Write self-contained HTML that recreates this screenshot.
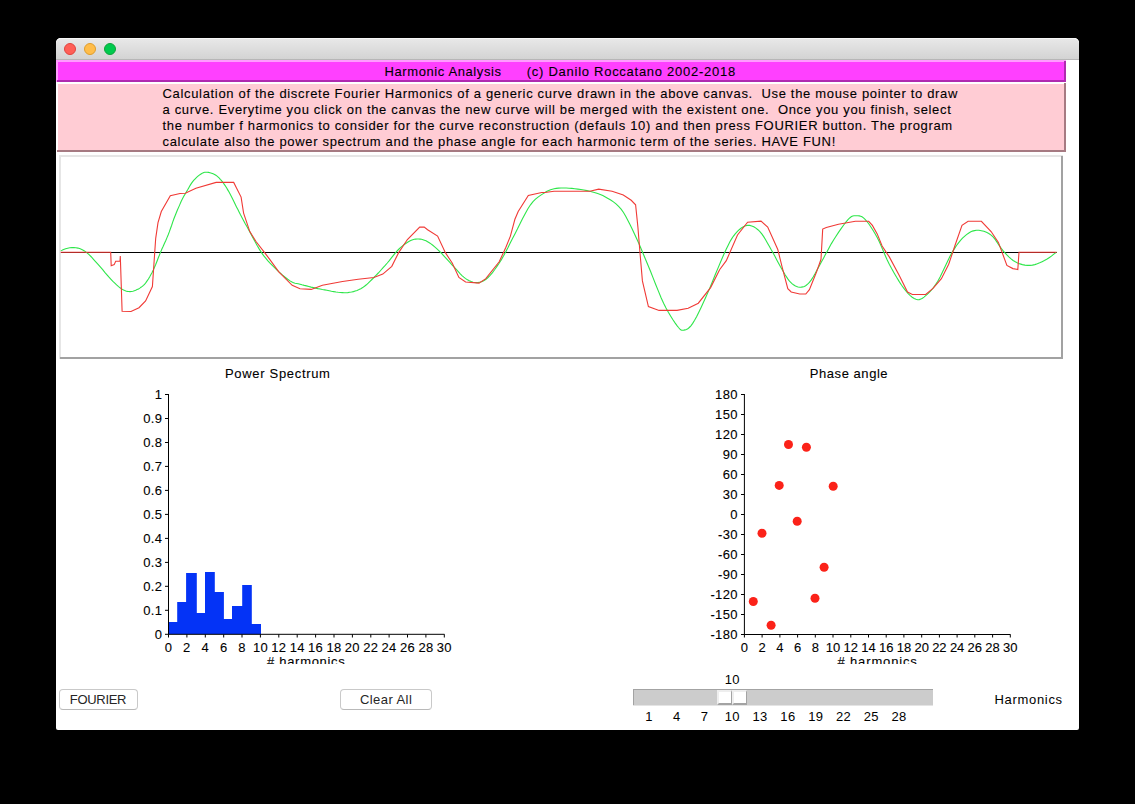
<!DOCTYPE html>
<html><head><meta charset="utf-8"><style>
html,body{margin:0;padding:0;background:#000;width:1135px;height:804px;overflow:hidden;}
.t{position:absolute;white-space:pre;line-height:16px;font-family:"Liberation Sans", sans-serif;-webkit-text-stroke:0.1px currentColor;}
.a{position:absolute;}
</style></head><body>

<div class="a" style="left:56px;top:38px;width:1023px;height:692px;background:#fff;border-radius:5px 5px 2px 2px;overflow:hidden;"></div>
<div class="a" style="left:56px;top:38px;width:1023px;height:21px;background:linear-gradient(#e9e9e9,#d3d3d3);border-radius:5px 5px 0 0;box-shadow:inset 0 1px 0 #f6f6f6;"></div>
<div class="a" style="left:56px;top:59px;width:1023px;height:1px;background:#b6b6b6;"></div>
<div class="a" style="left:64.20px;top:43.2px;width:10.2px;height:10.2px;border-radius:50%;background:#ff5f57;border:0.6px solid #e0443e;"></div>
<div class="a" style="left:84.20px;top:43.2px;width:10.2px;height:10.2px;border-radius:50%;background:#ffbd4a;border:0.6px solid #df9d2c;"></div>
<div class="a" style="left:104.20px;top:43.2px;width:10.2px;height:10.2px;border-radius:50%;background:#00ca4e;border:0.6px solid #0ea33a;"></div>
<div class="a" style="left:56px;top:60px;width:1010px;height:22px;background:#ff40ff;"></div>
<div class="a" style="left:56px;top:60px;width:1010px;height:2px;background:#ff9cff;"></div>
<div class="a" style="left:56px;top:60px;width:2px;height:22px;background:#ff9cff;"></div>
<div class="a" style="left:57px;top:80px;width:1009px;height:2px;background:#b02ab0;"></div>
<div class="a" style="left:1064px;top:61px;width:2px;height:21px;background:#b02ab0;"></div>
<div class="a" style="left:56px;top:82px;width:1010px;height:70px;background:#ffccd4;"></div>
<div class="a" style="left:56px;top:82px;width:1010px;height:2px;background:#fff;"></div>
<div class="a" style="left:56px;top:82px;width:2px;height:70px;background:#fff;"></div>
<div class="a" style="left:57px;top:150px;width:1009px;height:2px;background:#a67a82;"></div>
<div class="a" style="left:1064px;top:83px;width:2px;height:69px;background:#a67a82;"></div>
<div class="a" style="left:59px;top:155px;width:1004px;height:204px;background:#fff;"></div>
<div class="a" style="left:59px;top:155px;width:1004px;height:2px;background:#e6e6e6;"></div>
<div class="a" style="left:59px;top:155px;width:2px;height:204px;background:#e6e6e6;"></div>
<div class="a" style="left:60px;top:357px;width:1003px;height:2px;background:#a2a2a2;"></div>
<div class="a" style="left:1061px;top:156px;width:2px;height:203px;background:#a2a2a2;"></div>
<svg class="a" style="left:0;top:0" width="1135" height="804" viewBox="0 0 1135 804">
<line x1="61" y1="252.5" x2="1057" y2="252.5" stroke="#000" stroke-width="1.2"/>
<polyline fill="none" stroke="#2ee64a" stroke-width="1.1" points="60.8,250.6 62.0,250.2 63.6,249.6 65.6,248.8 67.7,248.2 69.8,247.7 71.9,247.5 73.9,247.6 75.9,247.8 78.0,248.1 80.2,248.8 82.3,249.7 84.5,250.9 86.7,252.6 89.1,254.7 91.4,257.0 93.7,259.6 96.0,262.1 98.3,264.6 100.5,267.1 102.7,269.6 104.8,272.3 107.0,274.8 109.0,277.2 111.0,279.4 112.9,281.4 114.8,283.2 116.6,284.9 118.3,286.4 120.0,287.8 121.6,288.9 123.1,289.8 124.6,290.5 125.9,291.0 127.3,291.4 128.6,291.5 130.0,291.6 131.4,291.5 132.9,291.2 134.3,290.8 135.7,290.3 137.1,289.6 138.5,288.9 139.8,288.1 141.0,287.3 142.3,286.4 143.5,285.3 144.7,284.1 145.9,282.6 147.1,280.9 148.4,279.0 149.6,277.0 150.8,274.8 152.1,272.4 153.3,269.9 154.5,267.2 155.8,264.3 157.0,261.2 158.2,258.0 159.5,254.9 160.7,251.9 161.9,249.0 163.2,246.3 164.4,243.5 165.7,240.7 166.9,237.9 168.1,235.0 169.3,231.9 170.4,228.7 171.6,225.5 172.7,222.2 173.8,219.0 175.0,216.0 176.2,213.0 177.4,210.0 178.7,207.1 179.9,204.4 181.0,201.8 182.1,199.6 183.0,197.7 183.8,196.2 184.6,194.9 185.3,193.7 186.1,192.5 186.9,191.1 187.8,189.6 188.7,187.9 189.6,186.3 190.6,184.6 191.6,183.1 192.7,181.6 193.9,180.2 195.2,178.8 196.6,177.4 198.0,176.2 199.3,175.1 200.6,174.2 201.8,173.5 202.8,172.9 203.8,172.5 204.9,172.3 206.0,172.2 207.2,172.2 208.6,172.4 210.0,172.7 211.6,173.2 213.1,173.8 214.6,174.5 215.9,175.3 217.1,176.1 218.2,177.1 219.3,178.1 220.3,179.3 221.3,180.4 222.3,181.6 223.2,182.8 224.1,184.1 225.0,185.4 225.9,186.7 226.7,188.1 227.6,189.6 228.5,191.1 229.3,192.6 230.1,194.1 231.0,195.8 231.9,197.6 232.9,199.6 234.0,201.8 235.2,204.3 236.5,206.9 237.9,209.6 239.2,212.2 240.5,214.8 241.8,217.2 243.0,219.4 244.2,221.7 245.4,224.0 246.9,226.6 248.5,229.5 250.4,233.0 252.5,236.9 254.7,241.0 257.0,245.2 259.3,249.1 261.5,252.6 263.6,255.6 265.7,258.2 267.7,260.6 269.8,262.9 272.0,265.1 274.3,267.4 276.8,269.8 279.5,272.4 282.3,274.9 285.1,277.2 287.7,279.3 290.0,280.9 292.0,282.0 293.6,282.8 295.1,283.2 296.6,283.5 298.2,283.8 300.0,284.2 302.0,284.8 304.2,285.4 306.5,285.9 308.8,286.5 311.1,287.1 313.4,287.6 315.6,288.1 317.9,288.6 320.1,289.0 322.4,289.5 324.7,289.9 326.9,290.3 329.2,290.7 331.5,291.2 333.7,291.6 336.0,292.0 338.2,292.3 340.3,292.5 342.3,292.6 344.2,292.7 346.0,292.7 347.8,292.6 349.7,292.3 351.5,292.0 353.4,291.6 355.2,291.0 357.1,290.4 359.0,289.6 360.8,288.7 362.7,287.6 364.5,286.3 366.4,284.8 368.2,283.2 370.0,281.4 371.9,279.5 373.9,277.5 376.0,275.3 378.3,273.0 380.6,270.5 382.9,267.9 385.2,265.4 387.3,263.0 389.3,260.6 391.2,258.2 393.0,255.9 394.8,253.6 396.7,251.4 398.5,249.5 400.4,247.7 402.3,246.1 404.2,244.5 406.1,243.2 408.0,242.0 409.7,241.0 411.3,240.2 412.8,239.7 414.3,239.3 415.7,239.1 417.1,239.0 418.6,239.0 420.1,239.1 421.5,239.3 423.0,239.7 424.4,240.2 426.0,240.8 427.6,241.7 429.3,242.7 431.0,243.9 432.8,245.3 434.7,246.8 436.7,248.6 438.8,250.6 441.2,253.0 443.8,255.8 446.6,258.9 449.4,261.9 452.0,264.8 454.4,267.4 456.5,269.7 458.5,271.8 460.3,273.8 462.0,275.6 463.8,277.2 465.6,278.6 467.5,279.8 469.3,280.8 471.2,281.6 473.1,282.2 474.9,282.5 476.8,282.6 478.6,282.4 480.5,282.0 482.3,281.4 484.1,280.5 486.0,279.2 488.0,277.5 490.1,275.3 492.3,272.8 494.6,269.8 496.8,266.6 499.1,263.2 501.4,259.6 503.6,255.8 505.8,251.7 508.0,247.5 510.2,243.0 512.5,238.5 514.9,233.9 517.4,229.1 520.0,223.8 522.6,218.5 525.3,213.4 527.9,208.7 530.5,204.8 533.0,201.7 535.5,199.2 538.0,197.1 540.5,195.4 542.8,193.9 545.0,192.5 547.0,191.3 548.8,190.4 550.5,189.7 552.3,189.2 554.1,188.8 556.2,188.4 558.5,188.1 561.0,188.0 563.6,188.0 566.3,188.0 569.1,188.2 571.9,188.4 574.8,188.7 577.8,189.1 580.9,189.5 583.9,190.0 586.9,190.6 589.8,191.3 592.5,192.0 595.2,192.7 597.7,193.5 600.3,194.4 602.8,195.5 605.4,196.9 608.0,198.4 610.7,200.0 613.4,201.9 616.0,203.9 618.6,206.4 621.1,209.2 623.5,212.5 625.7,216.3 627.9,220.4 630.1,224.7 632.3,229.3 634.5,233.9 636.7,238.7 638.9,243.6 641.1,248.7 643.3,254.0 645.6,259.5 648.0,265.2 650.5,271.3 653.1,277.9 655.8,284.8 658.5,291.4 661.1,297.7 663.6,303.2 666.0,308.0 668.5,312.5 670.9,316.5 673.1,320.0 675.2,323.1 677.0,325.6 678.5,327.5 679.7,328.8 680.7,329.7 681.6,330.1 682.6,330.2 683.8,330.1 685.1,329.9 686.4,329.4 687.8,328.7 689.3,327.5 690.9,325.8 692.7,323.4 694.6,320.3 696.7,316.5 698.8,312.2 701.1,307.4 703.6,302.1 706.1,296.5 708.9,290.1 712.0,282.7 715.2,274.8 718.4,267.1 721.4,260.0 724.0,254.0 726.2,249.2 728.2,245.2 729.9,241.8 731.6,238.9 733.3,236.3 735.2,233.9 737.2,231.6 739.2,229.7 741.3,228.0 743.4,226.7 745.5,225.8 747.6,225.4 749.7,225.4 751.7,225.9 753.8,226.8 755.9,228.1 757.9,229.7 759.9,231.6 761.8,233.9 763.7,236.6 765.6,239.7 767.4,242.9 769.3,246.2 771.1,249.5 773.0,252.8 774.9,256.3 776.8,259.9 778.7,263.5 780.5,266.8 782.2,269.7 783.7,272.3 785.1,274.7 786.5,276.9 787.8,278.9 789.1,280.6 790.5,282.2 792.0,283.6 793.5,284.8 795.0,285.8 796.6,286.5 798.1,287.0 799.7,287.2 801.3,287.1 802.8,286.9 804.4,286.4 806.0,285.5 807.6,284.2 809.4,282.4 811.3,279.9 813.3,276.7 815.3,273.2 817.4,269.3 819.5,265.5 821.5,261.8 823.5,258.2 825.4,254.6 827.4,250.9 829.4,247.2 831.4,243.6 833.6,240.0 836.0,236.3 838.5,232.4 841.1,228.6 843.7,225.0 846.1,221.8 848.2,219.4 850.0,217.7 851.5,216.6 852.8,216.0 854.0,215.8 855.3,215.7 856.6,215.7 858.0,215.7 859.3,215.9 860.6,216.2 862.0,216.8 863.5,217.9 865.1,219.4 866.9,221.5 868.9,224.0 870.9,227.0 873.0,230.3 875.1,233.8 877.2,237.5 879.2,241.5 881.1,245.9 883.1,250.5 885.1,255.2 887.1,259.8 889.3,264.2 891.6,268.5 894.1,272.9 896.6,277.3 899.1,281.4 901.6,285.2 903.9,288.4 906.1,291.2 908.2,293.6 910.3,295.6 912.2,297.2 914.2,298.5 916.0,299.3 917.7,299.7 919.3,299.6 920.9,299.1 922.4,298.2 924.0,297.1 925.7,295.7 927.5,294.1 929.5,292.2 931.5,290.0 933.5,287.5 935.6,284.6 937.8,281.2 940.1,277.0 942.5,272.1 945.0,266.7 947.5,261.4 950.0,256.3 952.3,252.1 954.5,248.6 956.5,245.5 958.5,242.8 960.5,240.3 962.5,238.2 964.5,236.3 966.5,234.6 968.5,233.2 970.4,232.0 972.4,231.1 974.4,230.6 976.6,230.3 978.9,230.3 981.3,230.7 983.9,231.3 986.4,232.3 988.8,233.5 991.1,235.1 993.3,237.2 995.3,239.7 997.3,242.6 999.3,245.6 1001.2,248.4 1003.2,250.9 1005.2,253.1 1007.1,255.2 1009.1,257.1 1011.1,258.9 1013.1,260.5 1015.3,261.8 1017.6,262.9 1020.0,263.9 1022.4,264.6 1024.9,265.1 1027.4,265.4 1029.9,265.4 1032.4,265.1 1034.8,264.6 1037.3,263.8 1039.7,262.8 1042.1,261.7 1044.4,260.6 1046.7,259.3 1049.1,257.7 1051.4,256.1 1053.5,254.4 1055.2,253.1 1056.5,252.1"/>
<polyline fill="none" stroke="#f03a36" stroke-width="1.1" points="60.6,252.2 110.7,252.2 111.2,265.7 114.2,264.6 115.7,261.2 120.0,261.2 120.3,256.1 122.1,311.3 131.0,311.5 139.0,307.7 145.6,301.0 152.4,286.5 154.0,263.0 155.7,238.3 158.0,222.7 161.3,211.5 170.3,195.8 180.0,193.5 185.3,193.3 195.9,188.2 216.1,182.4 233.7,182.4 236.5,188.0 241.1,197.1 243.6,213.1 249.8,231.6 256.0,241.5 264.6,252.6 269.9,259.6 278.8,271.9 292.2,285.3 300.0,288.7 311.2,289.4 322.4,285.3 342.5,281.5 358.2,279.3 373.9,277.5 382.8,274.1 391.8,266.3 398.5,252.9 407.4,239.5 419.7,227.1 424.2,227.1 427.6,229.8 437.6,236.1 445.5,252.9 452.2,263.0 458.9,277.5 465.6,282.0 479.0,283.1 485.8,278.6 499.2,261.8 505.9,247.3 510.4,236.1 514.9,219.3 518.2,211.5 528.3,195.4 541.7,192.5 545.0,192.5 554.0,191.3 589.8,191.3 598.7,189.1 612.1,191.3 623.3,195.1 631.2,200.3 635.6,204.8 637.9,227.1 640.1,254.0 642.4,280.9 648.4,306.6 659.1,310.4 677.0,310.4 688.2,308.2 698.3,303.2 710.6,287.6 719.6,269.7 726.3,260.7 737.5,235.0 747.6,222.2 761.0,221.1 767.7,227.1 777.8,249.5 782.2,267.4 787.8,288.7 791.2,292.0 799.7,294.0 805.8,294.0 809.4,289.6 816.7,271.5 821.0,259.3 822.7,229.1 826.3,227.4 838.5,224.2 855.4,221.3 868.7,221.3 872.4,225.4 877.2,233.9 882.1,246.0 889.3,256.9 899.0,275.1 907.5,292.1 912.4,294.5 925.7,294.5 933.0,288.4 941.4,278.7 948.7,264.2 954.8,246.0 962.0,225.4 968.1,221.3 981.4,221.3 991.1,231.5 998.4,242.4 1006.9,265.4 1012.9,268.6 1017.8,269.5 1019.0,252.3 1056.5,252.3"/>
<path d="M168.7,634.3 L168.7,622.0 L177.2,622.0 L177.2,602.0 L186.1,602.0 L186.1,573.0 L196.8,573.0 L196.8,613.0 L205.0,613.0 L205.0,572.0 L214.8,572.0 L214.8,591.9 L223.9,591.9 L223.9,619.1 L232.0,619.1 L232.0,606.1 L242.2,606.1 L242.2,585.0 L251.8,585.0 L251.8,623.9 L261.0,623.9 L261.0,634.3 Z" fill="#0433f6"/>
<line x1="168.5" y1="394" x2="168.5" y2="634.8" stroke="#000" stroke-width="1"/>
<line x1="168.5" y1="634.3" x2="444.5" y2="634.3" stroke="#000" stroke-width="1"/>
<line x1="165" y1="634.3" x2="168.5" y2="634.3" stroke="#000" stroke-width="1"/>
<line x1="165" y1="610.3" x2="168.5" y2="610.3" stroke="#000" stroke-width="1"/>
<line x1="165" y1="586.3" x2="168.5" y2="586.3" stroke="#000" stroke-width="1"/>
<line x1="165" y1="562.4" x2="168.5" y2="562.4" stroke="#000" stroke-width="1"/>
<line x1="165" y1="538.4" x2="168.5" y2="538.4" stroke="#000" stroke-width="1"/>
<line x1="165" y1="514.4" x2="168.5" y2="514.4" stroke="#000" stroke-width="1"/>
<line x1="165" y1="490.4" x2="168.5" y2="490.4" stroke="#000" stroke-width="1"/>
<line x1="165" y1="466.4" x2="168.5" y2="466.4" stroke="#000" stroke-width="1"/>
<line x1="165" y1="442.5" x2="168.5" y2="442.5" stroke="#000" stroke-width="1"/>
<line x1="165" y1="418.5" x2="168.5" y2="418.5" stroke="#000" stroke-width="1"/>
<line x1="165" y1="394.5" x2="168.5" y2="394.5" stroke="#000" stroke-width="1"/>
<line x1="168.5" y1="634.3" x2="168.5" y2="637.5" stroke="#000" stroke-width="1"/>
<line x1="186.9" y1="634.3" x2="186.9" y2="637.5" stroke="#000" stroke-width="1"/>
<line x1="205.3" y1="634.3" x2="205.3" y2="637.5" stroke="#000" stroke-width="1"/>
<line x1="223.7" y1="634.3" x2="223.7" y2="637.5" stroke="#000" stroke-width="1"/>
<line x1="242.0" y1="634.3" x2="242.0" y2="637.5" stroke="#000" stroke-width="1"/>
<line x1="260.4" y1="634.3" x2="260.4" y2="637.5" stroke="#000" stroke-width="1"/>
<line x1="278.8" y1="634.3" x2="278.8" y2="637.5" stroke="#000" stroke-width="1"/>
<line x1="297.2" y1="634.3" x2="297.2" y2="637.5" stroke="#000" stroke-width="1"/>
<line x1="315.6" y1="634.3" x2="315.6" y2="637.5" stroke="#000" stroke-width="1"/>
<line x1="334.0" y1="634.3" x2="334.0" y2="637.5" stroke="#000" stroke-width="1"/>
<line x1="352.4" y1="634.3" x2="352.4" y2="637.5" stroke="#000" stroke-width="1"/>
<line x1="370.8" y1="634.3" x2="370.8" y2="637.5" stroke="#000" stroke-width="1"/>
<line x1="389.1" y1="634.3" x2="389.1" y2="637.5" stroke="#000" stroke-width="1"/>
<line x1="407.5" y1="634.3" x2="407.5" y2="637.5" stroke="#000" stroke-width="1"/>
<line x1="425.9" y1="634.3" x2="425.9" y2="637.5" stroke="#000" stroke-width="1"/>
<line x1="444.3" y1="634.3" x2="444.3" y2="637.5" stroke="#000" stroke-width="1"/>
<line x1="744.4" y1="394" x2="744.4" y2="635.0" stroke="#000" stroke-width="1"/>
<line x1="744.4" y1="634.5" x2="1010.5" y2="634.5" stroke="#000" stroke-width="1"/>
<line x1="741" y1="634.5" x2="744.4" y2="634.5" stroke="#000" stroke-width="1"/>
<line x1="741" y1="614.5" x2="744.4" y2="614.5" stroke="#000" stroke-width="1"/>
<line x1="741" y1="594.5" x2="744.4" y2="594.5" stroke="#000" stroke-width="1"/>
<line x1="741" y1="574.5" x2="744.4" y2="574.5" stroke="#000" stroke-width="1"/>
<line x1="741" y1="554.5" x2="744.4" y2="554.5" stroke="#000" stroke-width="1"/>
<line x1="741" y1="534.5" x2="744.4" y2="534.5" stroke="#000" stroke-width="1"/>
<line x1="741" y1="514.5" x2="744.4" y2="514.5" stroke="#000" stroke-width="1"/>
<line x1="741" y1="494.5" x2="744.4" y2="494.5" stroke="#000" stroke-width="1"/>
<line x1="741" y1="474.5" x2="744.4" y2="474.5" stroke="#000" stroke-width="1"/>
<line x1="741" y1="454.5" x2="744.4" y2="454.5" stroke="#000" stroke-width="1"/>
<line x1="741" y1="434.5" x2="744.4" y2="434.5" stroke="#000" stroke-width="1"/>
<line x1="741" y1="414.5" x2="744.4" y2="414.5" stroke="#000" stroke-width="1"/>
<line x1="741" y1="394.5" x2="744.4" y2="394.5" stroke="#000" stroke-width="1"/>
<line x1="744.4" y1="634.5" x2="744.4" y2="637.5" stroke="#000" stroke-width="1"/>
<line x1="762.1" y1="634.5" x2="762.1" y2="637.5" stroke="#000" stroke-width="1"/>
<line x1="779.9" y1="634.5" x2="779.9" y2="637.5" stroke="#000" stroke-width="1"/>
<line x1="797.6" y1="634.5" x2="797.6" y2="637.5" stroke="#000" stroke-width="1"/>
<line x1="815.3" y1="634.5" x2="815.3" y2="637.5" stroke="#000" stroke-width="1"/>
<line x1="833.0" y1="634.5" x2="833.0" y2="637.5" stroke="#000" stroke-width="1"/>
<line x1="850.8" y1="634.5" x2="850.8" y2="637.5" stroke="#000" stroke-width="1"/>
<line x1="868.5" y1="634.5" x2="868.5" y2="637.5" stroke="#000" stroke-width="1"/>
<line x1="886.2" y1="634.5" x2="886.2" y2="637.5" stroke="#000" stroke-width="1"/>
<line x1="903.9" y1="634.5" x2="903.9" y2="637.5" stroke="#000" stroke-width="1"/>
<line x1="921.7" y1="634.5" x2="921.7" y2="637.5" stroke="#000" stroke-width="1"/>
<line x1="939.4" y1="634.5" x2="939.4" y2="637.5" stroke="#000" stroke-width="1"/>
<line x1="957.1" y1="634.5" x2="957.1" y2="637.5" stroke="#000" stroke-width="1"/>
<line x1="974.8" y1="634.5" x2="974.8" y2="637.5" stroke="#000" stroke-width="1"/>
<line x1="992.6" y1="634.5" x2="992.6" y2="637.5" stroke="#000" stroke-width="1"/>
<line x1="1010.3" y1="634.5" x2="1010.3" y2="637.5" stroke="#000" stroke-width="1"/>
<circle cx="753.3" cy="601.5" r="4.5" fill="#fb2219"/>
<circle cx="762" cy="533.2" r="4.5" fill="#fb2219"/>
<circle cx="771.1" cy="625.3" r="4.5" fill="#fb2219"/>
<circle cx="779.2" cy="485.4" r="4.5" fill="#fb2219"/>
<circle cx="788.5" cy="444.5" r="4.5" fill="#fb2219"/>
<circle cx="797.2" cy="521.3" r="4.5" fill="#fb2219"/>
<circle cx="806.4" cy="447.3" r="4.5" fill="#fb2219"/>
<circle cx="815" cy="598.3" r="4.5" fill="#fb2219"/>
<circle cx="824.1" cy="567.3" r="4.5" fill="#fb2219"/>
<circle cx="833.2" cy="486.2" r="4.5" fill="#fb2219"/>
</svg>
<div class="t" style="left:384.50px;top:64.00px;font-size:13px;letter-spacing:0.6px;color:#000;">Harmonic Analysis</div>
<div class="t" style="left:526.80px;top:64.00px;font-size:13px;letter-spacing:0.73px;color:#000;">(c) Danilo Roccatano 2002-2018</div>
<div class="t" style="left:162.50px;top:86.00px;font-size:13px;letter-spacing:0.675px;color:#000;">Calculation of the discrete Fourier Harmonics of a generic curve drawn in the above canvas.  Use the mouse pointer to draw</div>
<div class="t" style="left:162.50px;top:102.00px;font-size:13px;letter-spacing:0.675px;color:#000;">a curve. Everytime you click on the canvas the new curve will be merged with the existent one.  Once you you finish, select</div>
<div class="t" style="left:162.50px;top:118.00px;font-size:13px;letter-spacing:0.675px;color:#000;">the number f harmonics to consider for the curve reconstruction (defauls 10) and then press FOURIER button. The program</div>
<div class="t" style="left:162.50px;top:133.90px;font-size:13px;letter-spacing:0.675px;color:#000;">calculate also the power spectrum and the phase angle for each harmonic term of the series. HAVE FUN!</div>
<div class="t" style="left:225.00px;top:365.80px;font-size:13px;letter-spacing:0.68px;color:#000;">Power Spectrum</div>
<div class="t" style="left:809.80px;top:365.50px;font-size:13px;letter-spacing:0.55px;color:#000;">Phase angle</div>
<div class="t" style="right:972.80px;top:626.90px;font-size:13px;letter-spacing:0.3px;color:#000;text-align:right;">0</div>
<div class="t" style="right:972.80px;top:602.92px;font-size:13px;letter-spacing:0.3px;color:#000;text-align:right;">0.1</div>
<div class="t" style="right:972.80px;top:578.94px;font-size:13px;letter-spacing:0.3px;color:#000;text-align:right;">0.2</div>
<div class="t" style="right:972.80px;top:554.96px;font-size:13px;letter-spacing:0.3px;color:#000;text-align:right;">0.3</div>
<div class="t" style="right:972.80px;top:530.98px;font-size:13px;letter-spacing:0.3px;color:#000;text-align:right;">0.4</div>
<div class="t" style="right:972.80px;top:507.00px;font-size:13px;letter-spacing:0.3px;color:#000;text-align:right;">0.5</div>
<div class="t" style="right:972.80px;top:483.02px;font-size:13px;letter-spacing:0.3px;color:#000;text-align:right;">0.6</div>
<div class="t" style="right:972.80px;top:459.04px;font-size:13px;letter-spacing:0.3px;color:#000;text-align:right;">0.7</div>
<div class="t" style="right:972.80px;top:435.06px;font-size:13px;letter-spacing:0.3px;color:#000;text-align:right;">0.8</div>
<div class="t" style="right:972.80px;top:411.08px;font-size:13px;letter-spacing:0.3px;color:#000;text-align:right;">0.9</div>
<div class="t" style="right:972.80px;top:387.10px;font-size:13px;letter-spacing:0.3px;color:#000;text-align:right;">1</div>
<div class="t" style="left:68.50px;width:200px;top:639.80px;font-size:13px;letter-spacing:0.3px;color:#000;text-align:center;">0</div>
<div class="t" style="left:86.89px;width:200px;top:639.80px;font-size:13px;letter-spacing:0.3px;color:#000;text-align:center;">2</div>
<div class="t" style="left:105.27px;width:200px;top:639.80px;font-size:13px;letter-spacing:0.3px;color:#000;text-align:center;">4</div>
<div class="t" style="left:123.66px;width:200px;top:639.80px;font-size:13px;letter-spacing:0.3px;color:#000;text-align:center;">6</div>
<div class="t" style="left:142.05px;width:200px;top:639.80px;font-size:13px;letter-spacing:0.3px;color:#000;text-align:center;">8</div>
<div class="t" style="left:160.43px;width:200px;top:639.80px;font-size:13px;letter-spacing:0.3px;color:#000;text-align:center;">10</div>
<div class="t" style="left:178.82px;width:200px;top:639.80px;font-size:13px;letter-spacing:0.3px;color:#000;text-align:center;">12</div>
<div class="t" style="left:197.21px;width:200px;top:639.80px;font-size:13px;letter-spacing:0.3px;color:#000;text-align:center;">14</div>
<div class="t" style="left:215.59px;width:200px;top:639.80px;font-size:13px;letter-spacing:0.3px;color:#000;text-align:center;">16</div>
<div class="t" style="left:233.98px;width:200px;top:639.80px;font-size:13px;letter-spacing:0.3px;color:#000;text-align:center;">18</div>
<div class="t" style="left:252.37px;width:200px;top:639.80px;font-size:13px;letter-spacing:0.3px;color:#000;text-align:center;">20</div>
<div class="t" style="left:270.75px;width:200px;top:639.80px;font-size:13px;letter-spacing:0.3px;color:#000;text-align:center;">22</div>
<div class="t" style="left:289.14px;width:200px;top:639.80px;font-size:13px;letter-spacing:0.3px;color:#000;text-align:center;">24</div>
<div class="t" style="left:307.53px;width:200px;top:639.80px;font-size:13px;letter-spacing:0.3px;color:#000;text-align:center;">26</div>
<div class="t" style="left:325.91px;width:200px;top:639.80px;font-size:13px;letter-spacing:0.3px;color:#000;text-align:center;">28</div>
<div class="t" style="left:344.30px;width:200px;top:639.80px;font-size:13px;letter-spacing:0.3px;color:#000;text-align:center;">30</div>
<div class="t" style="right:397.30px;top:627.10px;font-size:13px;letter-spacing:0.3px;color:#000;text-align:right;">-180</div>
<div class="t" style="right:397.30px;top:607.10px;font-size:13px;letter-spacing:0.3px;color:#000;text-align:right;">-150</div>
<div class="t" style="right:397.30px;top:587.10px;font-size:13px;letter-spacing:0.3px;color:#000;text-align:right;">-120</div>
<div class="t" style="right:397.30px;top:567.10px;font-size:13px;letter-spacing:0.3px;color:#000;text-align:right;">-90</div>
<div class="t" style="right:397.30px;top:547.10px;font-size:13px;letter-spacing:0.3px;color:#000;text-align:right;">-60</div>
<div class="t" style="right:397.30px;top:527.10px;font-size:13px;letter-spacing:0.3px;color:#000;text-align:right;">-30</div>
<div class="t" style="right:397.30px;top:507.10px;font-size:13px;letter-spacing:0.3px;color:#000;text-align:right;">0</div>
<div class="t" style="right:397.30px;top:487.10px;font-size:13px;letter-spacing:0.3px;color:#000;text-align:right;">30</div>
<div class="t" style="right:397.30px;top:467.10px;font-size:13px;letter-spacing:0.3px;color:#000;text-align:right;">60</div>
<div class="t" style="right:397.30px;top:447.10px;font-size:13px;letter-spacing:0.3px;color:#000;text-align:right;">90</div>
<div class="t" style="right:397.30px;top:427.10px;font-size:13px;letter-spacing:0.3px;color:#000;text-align:right;">120</div>
<div class="t" style="right:397.30px;top:407.10px;font-size:13px;letter-spacing:0.3px;color:#000;text-align:right;">150</div>
<div class="t" style="right:397.30px;top:387.10px;font-size:13px;letter-spacing:0.3px;color:#000;text-align:right;">180</div>
<div class="t" style="left:644.40px;width:200px;top:639.80px;font-size:13px;letter-spacing:0.0px;color:#000;text-align:center;">0</div>
<div class="t" style="left:662.13px;width:200px;top:639.80px;font-size:13px;letter-spacing:0.0px;color:#000;text-align:center;">2</div>
<div class="t" style="left:679.85px;width:200px;top:639.80px;font-size:13px;letter-spacing:0.0px;color:#000;text-align:center;">4</div>
<div class="t" style="left:697.58px;width:200px;top:639.80px;font-size:13px;letter-spacing:0.0px;color:#000;text-align:center;">6</div>
<div class="t" style="left:715.31px;width:200px;top:639.80px;font-size:13px;letter-spacing:0.0px;color:#000;text-align:center;">8</div>
<div class="t" style="left:733.03px;width:200px;top:639.80px;font-size:13px;letter-spacing:0.0px;color:#000;text-align:center;">10</div>
<div class="t" style="left:750.76px;width:200px;top:639.80px;font-size:13px;letter-spacing:0.0px;color:#000;text-align:center;">12</div>
<div class="t" style="left:768.49px;width:200px;top:639.80px;font-size:13px;letter-spacing:0.0px;color:#000;text-align:center;">14</div>
<div class="t" style="left:786.21px;width:200px;top:639.80px;font-size:13px;letter-spacing:0.0px;color:#000;text-align:center;">16</div>
<div class="t" style="left:803.94px;width:200px;top:639.80px;font-size:13px;letter-spacing:0.0px;color:#000;text-align:center;">18</div>
<div class="t" style="left:821.67px;width:200px;top:639.80px;font-size:13px;letter-spacing:0.0px;color:#000;text-align:center;">20</div>
<div class="t" style="left:839.39px;width:200px;top:639.80px;font-size:13px;letter-spacing:0.0px;color:#000;text-align:center;">22</div>
<div class="t" style="left:857.12px;width:200px;top:639.80px;font-size:13px;letter-spacing:0.0px;color:#000;text-align:center;">24</div>
<div class="t" style="left:874.85px;width:200px;top:639.80px;font-size:13px;letter-spacing:0.0px;color:#000;text-align:center;">26</div>
<div class="t" style="left:892.57px;width:200px;top:639.80px;font-size:13px;letter-spacing:0.0px;color:#000;text-align:center;">28</div>
<div class="t" style="left:910.30px;width:200px;top:639.80px;font-size:13px;letter-spacing:0.0px;color:#000;text-align:center;">30</div>
<div class="a" style="left:0;top:0;width:1135px;height:664px;overflow:hidden;">
<div class="t" style="left:267.00px;top:653.80px;font-size:13px;letter-spacing:0.7px;color:#000;"># harmonics</div>
<div class="t" style="left:837.50px;top:653.80px;font-size:13px;letter-spacing:0.85px;color:#000;"># harmonics</div>
</div>
<div class="a" style="left:58.5px;top:689.3px;width:79.3px;height:20.4px;border:0.8px solid #c9c9c9;border-bottom-color:#b9b9b9;border-radius:4px;background:#fff;box-sizing:border-box;"></div>
<div class="t" style="left:69.80px;top:691.70px;font-size:13px;letter-spacing:-0.3px;color:#262626;-webkit-text-stroke:0;">FOURIER</div>
<div class="a" style="left:340px;top:689.3px;width:91.8px;height:20.4px;border:0.8px solid #c9c9c9;border-bottom-color:#b9b9b9;border-radius:4px;background:#fff;box-sizing:border-box;"></div>
<div class="t" style="left:360.00px;top:691.70px;font-size:13px;letter-spacing:0.42px;color:#262626;-webkit-text-stroke:0;">Clear All</div>
<div class="a" style="left:633px;top:689px;width:300px;height:17px;background:#cccccc;"></div>
<div class="a" style="left:633px;top:689px;width:300px;height:1px;background:#a3a3a3;"></div>
<div class="a" style="left:633px;top:689px;width:1px;height:17px;background:#a3a3a3;"></div>
<div class="a" style="left:633px;top:705px;width:300px;height:1px;background:#e4e4e4;"></div>
<div class="a" style="left:717px;top:690px;width:15px;height:15px;background:#fff;box-sizing:border-box;border-left:2px solid #eeeeee;border-top:2px solid #eeeeee;border-right:1.5px solid #a3a3a3;border-bottom:2px solid #a3a3a3;"></div>
<div class="a" style="left:732px;top:690px;width:15px;height:15px;background:#fff;box-sizing:border-box;border-left:2px solid #eeeeee;border-top:2px solid #eeeeee;border-right:1.5px solid #a3a3a3;border-bottom:2px solid #a3a3a3;"></div>
<div class="t" style="left:632.20px;width:200px;top:672.00px;font-size:13px;letter-spacing:0.3px;color:#000;text-align:center;-webkit-text-stroke:0;">10</div>
<div class="t" style="left:549.00px;width:200px;top:709.10px;font-size:13px;letter-spacing:0.3px;color:#000;text-align:center;-webkit-text-stroke:0;">1</div>
<div class="t" style="left:576.78px;width:200px;top:709.10px;font-size:13px;letter-spacing:0.3px;color:#000;text-align:center;-webkit-text-stroke:0;">4</div>
<div class="t" style="left:604.56px;width:200px;top:709.10px;font-size:13px;letter-spacing:0.3px;color:#000;text-align:center;-webkit-text-stroke:0;">7</div>
<div class="t" style="left:632.34px;width:200px;top:709.10px;font-size:13px;letter-spacing:0.3px;color:#000;text-align:center;-webkit-text-stroke:0;">10</div>
<div class="t" style="left:660.12px;width:200px;top:709.10px;font-size:13px;letter-spacing:0.3px;color:#000;text-align:center;-webkit-text-stroke:0;">13</div>
<div class="t" style="left:687.90px;width:200px;top:709.10px;font-size:13px;letter-spacing:0.3px;color:#000;text-align:center;-webkit-text-stroke:0;">16</div>
<div class="t" style="left:715.68px;width:200px;top:709.10px;font-size:13px;letter-spacing:0.3px;color:#000;text-align:center;-webkit-text-stroke:0;">19</div>
<div class="t" style="left:743.46px;width:200px;top:709.10px;font-size:13px;letter-spacing:0.3px;color:#000;text-align:center;-webkit-text-stroke:0;">22</div>
<div class="t" style="left:771.24px;width:200px;top:709.10px;font-size:13px;letter-spacing:0.3px;color:#000;text-align:center;-webkit-text-stroke:0;">25</div>
<div class="t" style="left:799.02px;width:200px;top:709.10px;font-size:13px;letter-spacing:0.3px;color:#000;text-align:center;-webkit-text-stroke:0;">28</div>
<div class="t" style="left:994.40px;top:691.70px;font-size:13px;letter-spacing:0.7px;color:#000;-webkit-text-stroke:0;">Harmonics</div>
</body></html>
